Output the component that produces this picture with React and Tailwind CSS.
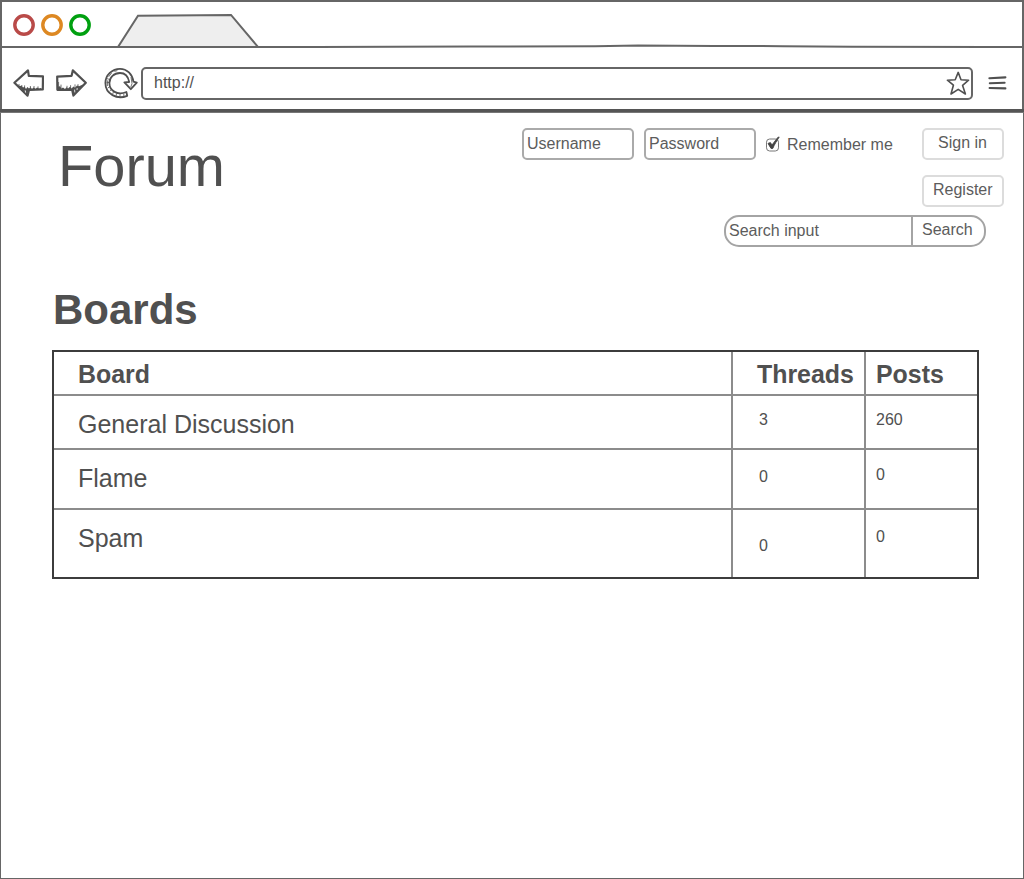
const INK = "#505050";

function BackArrow() {
  return (
    <svg className="block h-8 w-8" viewBox="0 0 32 32" fill="none" stroke={INK} strokeWidth="2.2" strokeLinejoin="round">
      <path d="M2.4 15.8 16 3.4 16.8 8.8 31 9.4 30.8 22.4 17 23 15.6 28.6Z" />
      <path d="M4 18 15 28.4 16.4 23.4 29.6 22.4 29 21 27 21.8 25 20.6 23.6 22 21.6 20.4 20 22 18.6 20.2 17 21.6 15.4 20 14 22 12.6 19.8 11 20.4 9.4 18.8 8 19Z" fill={INK} stroke="none" />
      <path d="M7 17v3M9.8 18v5M12.6 18.4v6M18.4 19v4M22 19v3M26 19.4v3" strokeWidth=".8" />
      <path d="M13.2 23.4 13.6 25.6" stroke="#fff" strokeWidth=".9" />
    </svg>
  );
}

function ForwardArrow() {
  return (
    <svg className="block h-8 w-8" viewBox="0 0 32 32" fill="none" stroke={INK} strokeWidth="2.2" strokeLinejoin="round">
      <path d="M2.2 9.6 16.6 8.8 17.8 3.4 30.8 15.8 18.4 28.6 17.2 23 2.4 22.8Z" />
      <path d="M2 22.8 2 17 3.6 20 5 19 6.4 21.4 8 20.4 10 22 11.6 20.2 13 21.6 15 19.8 16.6 21.6 18.4 19.6 20 20.8 22 18.6 24 19.2 28 17.4 18.6 28.2 17.2 23Z" fill={INK} stroke="none" />
      <path d="M3.6 15v6M6 17.6v4M12 18.8v4M15.6 18.2v4M20 17.4v6M23 17.2v4" strokeWidth=".8" />
      <path d="M19.6 22.6 19.8 25.4M22.2 21 22 23" stroke="#fff" strokeWidth=".8" />
    </svg>
  );
}

function Reload() {
  return (
    <svg className="block h-8 w-9" viewBox="0 0 36 32" fill="none" stroke={INK} strokeLinejoin="round">
      <path d="M23.2 28.8C13 33 1.4 27 1.4 16 1.4 8 8.2 1.8 16 1.8 23 1.8 28.4 7.2 29.4 14.6L32.8 15.6 26.8 22.2 20.4 15.4 25.2 15C24.2 9.6 20.8 6 16 6 10 6 5.4 10.4 5.4 16 5.4 24 13.6 28.6 22.4 25Z" strokeWidth="1.8" />
      <path d="M3.4 19 3.4 13.4M4.6 9.8 7.6 6M10.4 4.4 13.4 3.6M3.8 21 6 19.6M5.6 24.2 7.6 22.4M8.6 27.2 9.6 24.6M12 29.2 12.6 26.4M16 30V27M19.8 29.8V26.6M2.4 15.8 5.4 15.4M3 11.6 6 12.6" strokeWidth=".8" />
      <path d="M27 10 28 16.6 26.8 20" strokeWidth=".8" />
    </svg>
  );
}

function Star() {
  return (
    <svg className="block h-6 w-6" viewBox="0 0 24 24" fill="none" stroke={INK} strokeWidth="1.6" strokeLinejoin="round">
      <path d="M12.2 1.4 15 8.8 22.6 9.2 16.6 14.4 19.4 23 12.2 18.4 5 23 7.4 14.2 1.4 9.2 9.2 8.8Z" />
    </svg>
  );
}

function Menu() {
  return (
    <svg className="block h-[14px] w-[19px]" viewBox="0 0 19 14" fill="none" stroke={INK} strokeWidth="2.1" strokeLinecap="round">
      <path d="M1.4 2.2 17.4 1.4M1.8 7.3 16.6 6.7M1.6 12 17.4 12.4" />
    </svg>
  );
}

function Chrome() {
  return (
    <header className="h-[109px] border-x-2 border-t-2 border-[#666]">
      <div className="flex h-11">
        <svg className="ml-[10px] block h-11 w-[84px]" viewBox="0 0 84 44" fill="none" strokeWidth="3.4">
          <circle cx="12" cy="23" r="9.2" stroke="#b94a48" />
          <circle cx="40" cy="23" r="9.2" stroke="#dd8822" />
          <circle cx="68" cy="23" r="9.2" stroke="#00a010" />
        </svg>
        <svg className="ml-[20px] block h-11 w-[144px]" viewBox="0 0 144 44">
          <path d="M2 45 22 13.8 115 12.9 142 45" fill="#eee" stroke="#666" strokeWidth="2" />
        </svg>
      </div>
      <svg className="-mt-1 block h-1.5 w-full" viewBox="0 0 1020 6" fill="none">
        <path d="M0 5H315L469 4.6 593 4.3 636 3.4 712 3.9 781 4.2 850 4.7 986 4.9 1020 5" stroke="#666" strokeWidth="2" />
      </svg>
      <div className="flex h-[61px] pt-[19px] pl-[10px]">
        <BackArrow />
        <div className="ml-[11px]"><ForwardArrow /></div>
        <div className="ml-[17px]"><Reload /></div>
        <div className="ml-px flex h-[33px] w-[832px] justify-between rounded-[5px] border-2 border-[#666] pt-[2px] pr-[1px] pl-[11px]">
          <span className="pt-[2px] text-[16px] leading-5">http://</span>
          <Star />
        </div>
        <div className="pt-[9px] pl-[15px]"><Menu /></div>
      </div>
    </header>
  );
}

function CheckBox() {
  return (
    <svg className="block h-[18px] w-[17px]" viewBox="0 0 17 18" fill="none">
      <rect x="1.5" y="4" width="12" height="12" rx="3.2" stroke="#777" />
      <path d="M3 8.4 5.4 7.6 7 10 12.8 2.4 14.2 2C12 5.6 9.4 9.4 7.8 13.4L6 13.4Z" fill="#444" stroke="#444" strokeWidth=".9" />
    </svg>
  );
}

const rows = [
  { h: "h-[52px]", name: "General Discussion", nameTop: "pt-[13px]", threads: "3", tTop: "pt-[14px]", posts: "260", pTop: "pt-[14px]" },
  { h: "h-[58px]", name: "Flame", nameTop: "pt-[13px]", threads: "0", tTop: "pt-[17px]", posts: "0", pTop: "pt-[15px]" },
  { h: "h-[67px]", name: "Spam", nameTop: "pt-[13px]", threads: "0", tTop: "pt-[26px]", posts: "0", pTop: "pt-[17px]" },
];

function Boards() {
  return (
    <div className="ml-[51px] w-[927px] border-2 border-[#3c3c3c]">
      <div className="flex h-[42px] text-[24.9px] leading-[30px] font-bold">
        <div className="w-[679px] border-r-2 border-[#8c8c8c] pt-[7px] pl-6">Board</div>
        <div className="w-[133px] border-r-2 border-[#8c8c8c] pt-[7px] pl-6">Threads</div>
        <div className="pt-[7px] pl-[10px]">Posts</div>
      </div>
      {rows.map((r) => (
        <div key={r.name} className="border-t-2 border-[#8c8c8c]">
          <div className={`flex ${r.h} text-[16px] leading-5`}>
            <div className={`w-[679px] border-r-2 border-[#8c8c8c] pl-6 text-[25px] leading-[30px] ${r.nameTop}`}>{r.name}</div>
            <div className={`w-[133px] border-r-2 border-[#8c8c8c] pl-[26px] ${r.tTop}`}>{r.threads}</div>
            <div className={`pl-[10px] ${r.pTop}`}>{r.posts}</div>
          </div>
        </div>
      ))}
    </div>
  );
}

export default function App() {
  return (
    <div className="flex h-[879px] w-[1024px] flex-col overflow-hidden bg-white font-['Liberation_Sans',Arial,sans-serif] whitespace-nowrap text-[#505050]">
      <Chrome />
      <div className="h-1 shrink-0 border-b border-[#777] bg-[#555]" />
      <main className="grow border-x border-b border-[#666]">
        <div className="flex h-[166px] justify-between">
          <h1 className="pt-[19px] pl-[57px] text-[57.8px] leading-[68px]">Forum</h1>
          <div className="w-[501px] pt-[15px] text-[16px] leading-5 text-[#5c5c5c]">
            <div className="flex">
              <div className="h-8 w-28 rounded-[5px] border-2 border-[#aaa] pt-[4px] pl-[3px]">Username</div>
              <div className="ml-[10px] h-8 w-28 rounded-[5px] border-2 border-[#aaa] pt-[4px] pl-[3px]">Password</div>
              <div className="pt-[7px] pl-[9px]"><CheckBox /></div>
              <span className="ml-[5px] w-[135px] pt-[7px]">Remember me</span>
              <div className="h-8 w-[82px] rounded-[5px] border-2 border-[#dcdcdc] pt-[3px] pl-[14px]">Sign in</div>
            </div>
            <div className="mt-[15px] ml-[400px] h-8 w-[82px] rounded-[5px] border-2 border-[#dcdcdc] pt-[3px] pl-[9px]">Register</div>
            <div className="mt-2 ml-[202px] flex h-8 w-[262px] rounded-[15px] border-2 border-[#a4a4a4]">
              <div className="w-[187px] border-r-2 border-[#a4a4a4] pt-[4px] pl-[3px]">Search input</div>
              <div className="pt-[3px] pl-[9px]">Search</div>
            </div>
          </div>
        </div>
        <h2 className="h-[71px] pt-[7px] pl-[52px] text-[42px] leading-[48px] font-bold">Boards</h2>
        <Boards />
      </main>
    </div>
  );
}
